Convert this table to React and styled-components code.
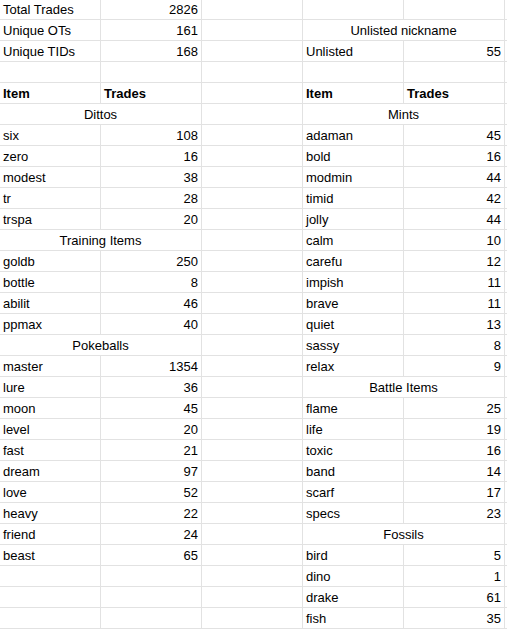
import React from "react";
import styled, { createGlobalStyle } from "styled-components";

const GlobalStyle = createGlobalStyle`
  body {
    margin: 0;
    background: #fff;
    font-family: "Liberation Sans", Arial, sans-serif;
  }
`;

const Viewport = styled.div`
  width: 100%;
  overflow: hidden;
`;

const Sheet = styled.div`
  display: grid;
  grid-template-columns: repeat(6, 101px);
  grid-template-rows: 20px repeat(29, 21px);
  width: 606px;
  font-size: 13px;
  color: #000;
`;

const Cell = styled.div`
  box-sizing: border-box;
  grid-column: span ${(p) => p.$span || 1};
  border-right: 1px solid #e2e2e2;
  border-bottom: 1px solid #e2e2e2;
  padding: 0 3px;
  display: flex;
  align-items: center;
  justify-content: ${(p) =>
    p.$align === "right" ? "flex-end" : p.$align === "center" ? "center" : "flex-start"};
  font-weight: ${(p) => (p.$bold ? "bold" : "normal")};
  white-space: nowrap;
  overflow: hidden;
  line-height: 15px;
`;

const left = [
  ["Total Trades", 2826],
  ["Unique OTs", 161],
  ["Unique TIDs", 168],
  null,
  "header",
  { section: "Dittos" },
  ["six", 108],
  ["zero", 16],
  ["modest", 38],
  ["tr", 28],
  ["trspa", 20],
  { section: "Training Items" },
  ["goldb", 250],
  ["bottle", 8],
  ["abilit", 46],
  ["ppmax", 40],
  { section: "Pokeballs" },
  ["master", 1354],
  ["lure", 36],
  ["moon", 45],
  ["level", 20],
  ["fast", 21],
  ["dream", 97],
  ["love", 52],
  ["heavy", 22],
  ["friend", 24],
  ["beast", 65],
  null,
  null,
  null,
];

const right = [
  null,
  { section: "Unlisted nickname" },
  ["Unlisted", 55],
  null,
  "header",
  { section: "Mints" },
  ["adaman", 45],
  ["bold", 16],
  ["modmin", 44],
  ["timid", 42],
  ["jolly", 44],
  ["calm", 10],
  ["carefu", 12],
  ["impish", 11],
  ["brave", 11],
  ["quiet", 13],
  ["sassy", 8],
  ["relax", 9],
  { section: "Battle Items" },
  ["flame", 25],
  ["life", 19],
  ["toxic", 16],
  ["band", 14],
  ["scarf", 17],
  ["specs", 23],
  { section: "Fossils" },
  ["bird", 5],
  ["dino", 1],
  ["drake", 61],
  ["fish", 35],
];

const renderPair = (item, key) => {
  if (item === null) {
    return [<Cell key={key + "a"} />, <Cell key={key + "b"} />];
  }
  if (item === "header") {
    return [
      <Cell key={key + "a"} $bold>Item</Cell>,
      <Cell key={key + "b"} $bold>Trades</Cell>,
    ];
  }
  if (item.section) {
    return [
      <Cell key={key + "s"} $span={2} $align="center">
        {item.section}
      </Cell>,
    ];
  }
  return [
    <Cell key={key + "a"}>{item[0]}</Cell>,
    <Cell key={key + "b"} $align="right">
      {item[1]}
    </Cell>,
  ];
};

export default function App() {
  return (
    <>
      <GlobalStyle />
      <Viewport>
        <Sheet>
          {left.map((l, i) => [
            ...renderPair(l, "l" + i),
            <Cell key={"c" + i} />,
            ...renderPair(right[i], "r" + i),
            <Cell key={"e" + i} />,
          ])}
        </Sheet>
      </Viewport>
    </>
  );
}
